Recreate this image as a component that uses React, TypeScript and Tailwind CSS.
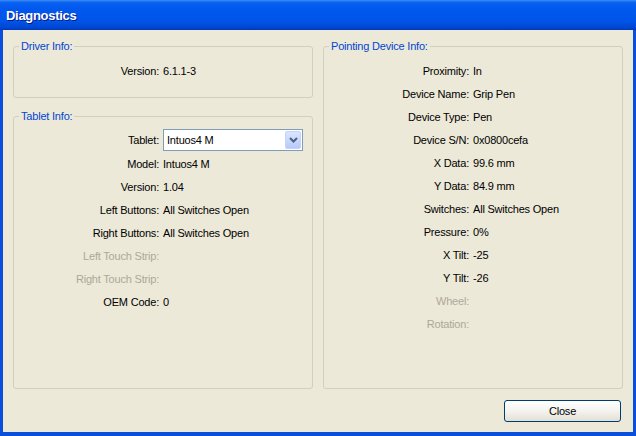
const font = '[font-family:"Liberation_Sans",Arial,sans-serif]';

type Row = { label: string; value?: string; disabled?: boolean };

const tabletRows: Row[] = [
  { label: 'Model:', value: 'Intuos4 M' },
  { label: 'Version:', value: '1.04' },
  { label: 'Left Buttons:', value: 'All Switches Open' },
  { label: 'Right Buttons:', value: 'All Switches Open' },
  { label: 'Left Touch Strip:', disabled: true },
  { label: 'Right Touch Strip:', disabled: true },
  { label: 'OEM Code:', value: '0' },
];

const pointingRows: Row[] = [
  { label: 'Proximity:', value: 'In' },
  { label: 'Device Name:', value: 'Grip Pen' },
  { label: 'Device Type:', value: 'Pen' },
  { label: 'Device S/N:', value: '0x0800cefa' },
  { label: 'X Data:', value: '99.6 mm' },
  { label: 'Y Data:', value: '84.9 mm' },
  { label: 'Switches:', value: 'All Switches Open' },
  { label: 'Pressure:', value: '0%' },
  { label: 'X Tilt:', value: '-25' },
  { label: 'Y Tilt:', value: '-26' },
  { label: 'Wheel:', disabled: true },
  { label: 'Rotation:', disabled: true },
];

const InfoRow = ({ label, value, disabled }: Row) => (
  <>
    <span className={`h-[23px] pt-[3px] flex items-center justify-end ${disabled ? 'text-[#aca899]' : 'text-black'}`}>{label}</span>
    <span className="h-[23px] pt-[3px] flex items-center text-black">{value}</span>
  </>
);

const GroupBox = ({ title, className, children }: { title: string; className?: string; children: React.ReactNode }) => (
  <fieldset className={`border border-[#d0d0bf] rounded-[3px] ${className ?? ''}`}>
    <legend className="ml-[5px] px-[2px] leading-[13px] text-[#0046d5]">{title}</legend>
    {children}
  </fieldset>
);

const Combo = () => (
  <div className="h-[22px] w-[140px] border border-[#7f9db9] bg-white flex items-center">
    <span className="flex-1 pl-[3px] pt-[1px]">Intuos4 M</span>
    <div className="w-[16px] h-[18px] mr-[1px] rounded-[2px] border border-[#c3d3fd] bg-gradient-to-b from-[#dbe5fd] to-[#b7cbf8] flex items-center justify-center">
      <svg width="9" height="6" viewBox="0 0 9 6">
        <polyline points="1,1 4.5,4.5 8,1" fill="none" stroke="#4d6185" strokeWidth="2" />
      </svg>
    </div>
  </div>
);

export default function App() {
  return (
    <div className={`w-[636px] h-[436px] flex flex-col text-[11px] tracking-[-0.2px] ${font}`}>
      <div className="h-[30px] shrink-0 flex items-center pl-[6px] bg-[linear-gradient(to_bottom,#3d8cf5_0%,#0a62f2_8%,#0058ee_30%,#0055e8_70%,#0046d2_92%,#0038b8_100%)]">
        <span className="text-white font-bold text-[13px] tracking-[-0.3px] [text-shadow:1px_1px_#0a1883] pt-[2px]">Diagnostics</span>
      </div>
      <div className="flex-1 flex flex-col bg-[#ece9d8] border-x-[3px] border-b-[4px] border-[#0a4fdc] px-[10px] pt-[10px] pb-[10px]">
        <div className="flex-1 flex gap-[10px]">
          <div className="w-[300px] flex flex-col gap-[12px]">
            <GroupBox title="Driver Info:" className="pt-[5px] pb-[16px]">
              <div className="grid grid-cols-[145px_1fr] gap-x-[4px]">
                <InfoRow label="Version:" value="6.1.1-3" />
              </div>
            </GroupBox>
            <GroupBox title="Tablet Info:" className="flex-1 pt-[5px]">
              <div className="grid grid-cols-[145px_1fr] gap-x-[4px]">
                <span className="h-[23px] pt-[1px] flex items-center justify-end">Tablet:</span>
                <span className="h-[23px] flex items-center"><Combo /></span>
                {tabletRows.map((r) => (
                  <InfoRow key={r.label} {...r} />
                ))}
              </div>
            </GroupBox>
          </div>
          <GroupBox title="Pointing Device Info:" className="w-[300px] pt-[5px]">
            <div className="grid grid-cols-[145px_1fr] gap-x-[4px]">
              {pointingRows.map((r) => (
                <InfoRow key={r.label} {...r} />
              ))}
            </div>
          </GroupBox>
        </div>
        <div className="flex justify-end mt-[11px] pr-[2px]">
          <button className="w-[117px] h-[22px] rounded-[3px] border border-[#003c74] bg-gradient-to-b from-white via-[#f4f3ee] to-[#e3e0d4] text-black">
            Close
          </button>
        </div>
      </div>
    </div>
  );
}
